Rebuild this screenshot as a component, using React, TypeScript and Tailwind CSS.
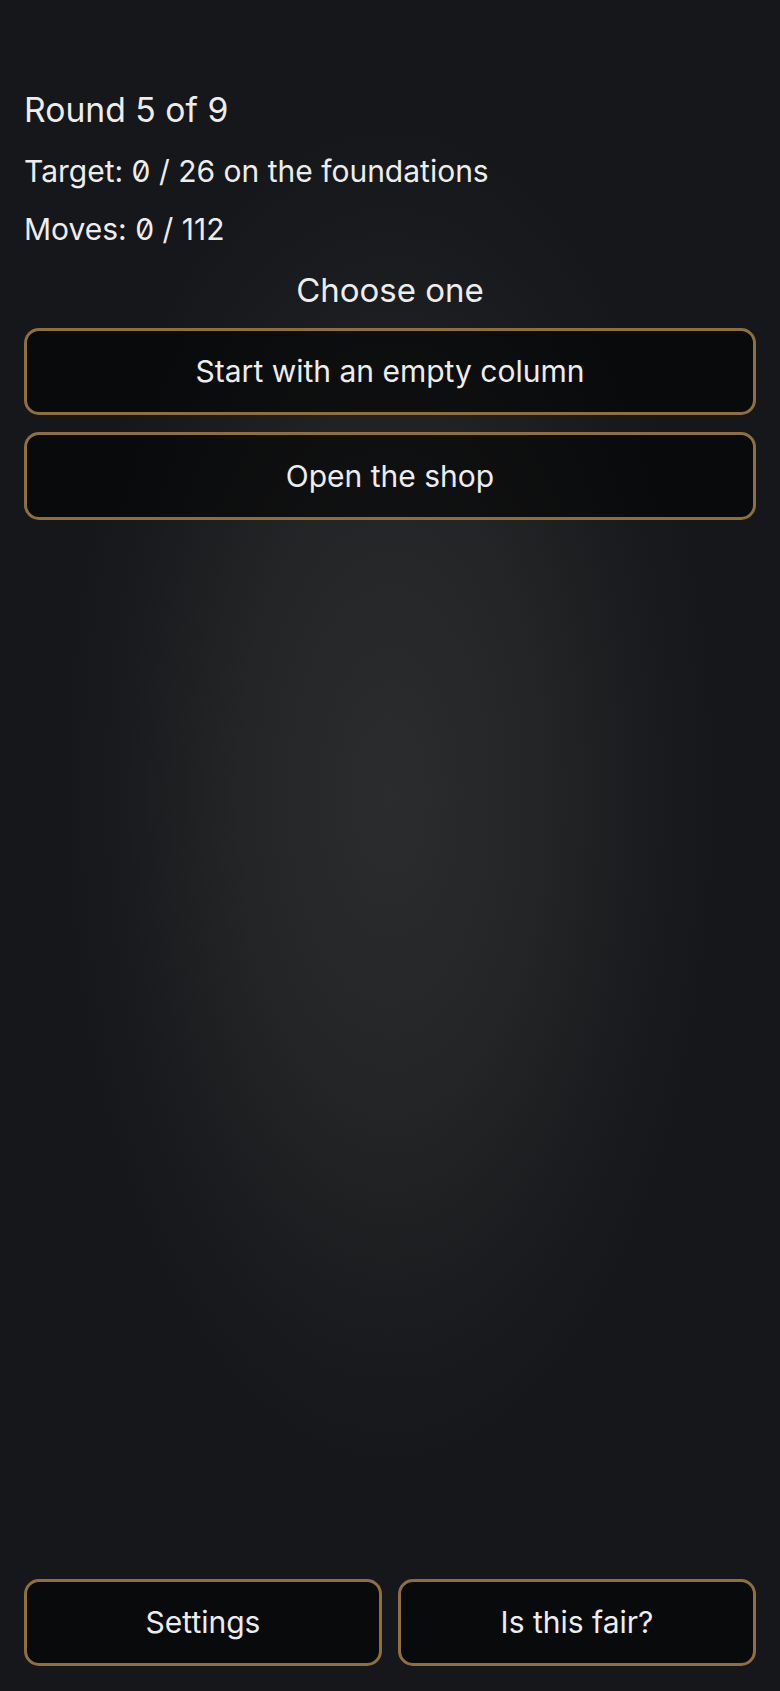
import React from "react";

const font = { fontFamily: "Inter, 'Noto Sans', sans-serif" };

function GoldButton({ children, className = "" }: { children: React.ReactNode; className?: string }) {
  return (
    <button
      className={
        "flex items-center justify-center rounded-[15px] border-[3px] border-[#8f6f40] bg-black/55 text-[30px] text-[#ededed] " +
        className
      }
    >
      {children}
    </button>
  );
}

export default function App() {
  return (
    <div
      style={font}
      className="flex min-h-[1691px] flex-col bg-[#15171a] bg-[radial-gradient(ellipse_42%_40%_at_50%_47%,#2b2c2d_0%,#232526_45%,#191b1e_80%,#15171a_100%)] px-6 pb-[25px] pt-[90px] text-[#ededed] [font-feature-settings:'zero']"
    >
      <div className="text-[33.7px] leading-[40px]">Round 5 of 9</div>
      <div className="mt-[21px] text-[30px] leading-[40px]">Target: 0 / 26 on the foundations</div>
      <div className="mt-[18px] text-[30px] leading-[40px]">Moves: 0 / 112</div>
      <div className="mt-[21px] text-center text-[33px] leading-[40px]">Choose one</div>
      <GoldButton className="mt-[18px] h-[87px] w-full">Start with an empty column</GoldButton>
      <GoldButton className="mt-[17px] h-[88px] w-full">Open the shop</GoldButton>
      <div className="flex-1" />
      <div className="grid grid-cols-2 gap-4">
        <GoldButton className="h-[87px]">Settings</GoldButton>
        <GoldButton className="h-[87px]">Is this fair?</GoldButton>
      </div>
    </div>
  );
}
